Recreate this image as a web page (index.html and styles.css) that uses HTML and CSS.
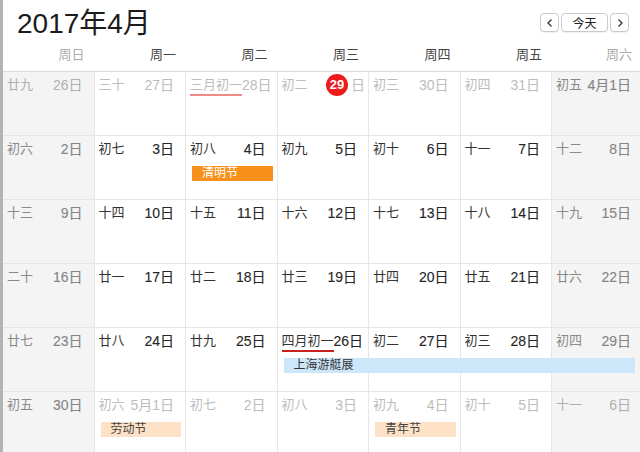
FILE: index.html
```html
<!DOCTYPE html>
<html lang="zh-CN">
<head>
<meta charset="utf-8">
<title>2017年4月</title>
<link rel="stylesheet" href="styles.css">
</head>
<body>
<div class="app">
  <header class="top">
    <h1 class="title">2017年4月</h1>
    <div class="nav">
      <button class="btn arrow" aria-label="上个月"><svg width="8" height="10" viewBox="0 0 8 10"><path d="M5.5 1.5 L2 5 L5.5 8.5" fill="none" stroke="#333" stroke-width="1.3"/></svg></button>
      <button class="btn today">今天</button>
      <button class="btn arrow" aria-label="下个月"><svg width="8" height="10" viewBox="0 0 8 10"><path d="M2.5 1.5 L6 5 L2.5 8.5" fill="none" stroke="#333" stroke-width="1.3"/></svg></button>
    </div>
  </header>
  <div class="weekdays">
    <div class="wd we">周日</div>
    <div class="wd">周一</div>
    <div class="wd">周二</div>
    <div class="wd">周三</div>
    <div class="wd">周四</div>
    <div class="wd">周五</div>
    <div class="wd we">周六</div>
  </div>
  <div class="month">
    <div class="week">
      <div class="cell wkend out"><span class="lunar">廿九</span><span class="num">26日</span></div>
      <div class="cell out"><span class="lunar">三十</span><span class="num">27日</span></div>
      <div class="cell out"><span class="lunar mark light">三月初一</span><span class="num">28日</span></div>
      <div class="cell out today"><span class="lunar">初二</span><span class="num"><span class="circle">29</span>日</span></div>
      <div class="cell out"><span class="lunar">初三</span><span class="num">30日</span></div>
      <div class="cell out"><span class="lunar">初四</span><span class="num">31日</span></div>
      <div class="cell wkend"><span class="lunar">初五</span><span class="num">4月1日</span></div>
    </div>
    <div class="week">
      <div class="cell wkend"><span class="lunar">初六</span><span class="num">2日</span></div>
      <div class="cell"><span class="lunar">初七</span><span class="num">3日</span></div>
      <div class="cell"><span class="lunar">初八</span><span class="num">4日</span></div>
      <div class="cell"><span class="lunar">初九</span><span class="num">5日</span></div>
      <div class="cell"><span class="lunar">初十</span><span class="num">6日</span></div>
      <div class="cell"><span class="lunar">十一</span><span class="num">7日</span></div>
      <div class="cell wkend"><span class="lunar">十二</span><span class="num">8日</span></div>
      <div class="ev orange col-tue">清明节</div>
    </div>
    <div class="week">
      <div class="cell wkend"><span class="lunar">十三</span><span class="num">9日</span></div>
      <div class="cell"><span class="lunar">十四</span><span class="num">10日</span></div>
      <div class="cell"><span class="lunar">十五</span><span class="num">11日</span></div>
      <div class="cell"><span class="lunar">十六</span><span class="num">12日</span></div>
      <div class="cell"><span class="lunar">十七</span><span class="num">13日</span></div>
      <div class="cell"><span class="lunar">十八</span><span class="num">14日</span></div>
      <div class="cell wkend"><span class="lunar">十九</span><span class="num">15日</span></div>
    </div>
    <div class="week">
      <div class="cell wkend"><span class="lunar">二十</span><span class="num">16日</span></div>
      <div class="cell"><span class="lunar">廿一</span><span class="num">17日</span></div>
      <div class="cell"><span class="lunar">廿二</span><span class="num">18日</span></div>
      <div class="cell"><span class="lunar">廿三</span><span class="num">19日</span></div>
      <div class="cell"><span class="lunar">廿四</span><span class="num">20日</span></div>
      <div class="cell"><span class="lunar">廿五</span><span class="num">21日</span></div>
      <div class="cell wkend"><span class="lunar">廿六</span><span class="num">22日</span></div>
    </div>
    <div class="week">
      <div class="cell wkend"><span class="lunar">廿七</span><span class="num">23日</span></div>
      <div class="cell"><span class="lunar">廿八</span><span class="num">24日</span></div>
      <div class="cell"><span class="lunar">廿九</span><span class="num">25日</span></div>
      <div class="cell"><span class="lunar mark">四月初一</span><span class="num">26日</span></div>
      <div class="cell"><span class="lunar">初二</span><span class="num">27日</span></div>
      <div class="cell"><span class="lunar">初三</span><span class="num">28日</span></div>
      <div class="cell wkend"><span class="lunar">初四</span><span class="num">29日</span></div>
      <div class="ev blue col-wed-sat">上海游艇展</div>
    </div>
    <div class="week">
      <div class="cell wkend"><span class="lunar">初五</span><span class="num">30日</span></div>
      <div class="cell out"><span class="lunar">初六</span><span class="num">5月1日</span></div>
      <div class="cell out"><span class="lunar">初七</span><span class="num">2日</span></div>
      <div class="cell out"><span class="lunar">初八</span><span class="num">3日</span></div>
      <div class="cell out"><span class="lunar">初九</span><span class="num">4日</span></div>
      <div class="cell out"><span class="lunar">初十</span><span class="num">5日</span></div>
      <div class="cell wkend out"><span class="lunar">十一</span><span class="num">6日</span></div>
      <div class="ev peach col-mon">劳动节</div>
      <div class="ev peach col-thu">青年节</div>
    </div>
  </div>
</div>
</body>
</html>
```

FILE: styles.css
```css
* { box-sizing: border-box; }

html, body {
  margin: 0;
  padding: 0;
  background: #fff;
  overflow: hidden;
}

body {
  font-family: "Liberation Sans", "Noto Sans CJK SC", sans-serif;
  color: #222;
}

.app {
  width: 640px;
  height: 452px;
  border-left: 3px solid #b3b3b3;
  overflow: hidden;
}

.top {
  display: flex;
  justify-content: space-between;
  align-items: flex-start;
  height: 42px;
}

.title {
  margin: 0;
  padding: 4px 0 0 14px;
  font-size: 28px;
  font-weight: normal;
  line-height: 40px;
  color: #1b1b1b;
  white-space: nowrap;
}

.nav {
  display: flex;
  gap: 2px;
  margin: 13px 11px 0 0;
}

.btn {
  height: 19px;
  border: 1px solid #cacaca;
  border-radius: 4px;
  background: #fff;
  padding: 0;
  display: flex;
  align-items: center;
  justify-content: center;
  font-family: "Liberation Sans", "Noto Sans CJK SC", sans-serif;
  font-size: 12px;
  color: #222;
  box-shadow: 0 1px 0 rgba(0,0,0,0.05);
}

.btn.arrow { width: 19px; }
.btn.today { width: 47px; }

.weekdays {
  display: grid;
  grid-template-columns: repeat(6, 91.5px) 88px;
  height: 30px;
  border-bottom: 1px solid #d9d9d9;
}

.wd {
  text-align: right;
  padding: 4px 10px 0 0;
  font-size: 13px;
  line-height: 18px;
  color: #444;
}

.wd.we { color: #ababab; }
.wd:last-child { padding-right: 8px; }

.week {
  display: grid;
  grid-template-columns: repeat(6, 91.5px) 88px;
  grid-template-rows: 30px 15px 1fr;
  height: 64px;
}

.cell {
  grid-row: 1 / 4;
  display: flex;
  justify-content: space-between;
  align-items: flex-start;
  padding: 4px 11px 0 4px;
  border-right: 1px solid #e6e6e6;
  border-bottom: 1px solid #e6e6e6;
  white-space: nowrap;
  min-width: 0;
}

.cell:nth-child(1) { grid-column: 1; }
.cell:nth-child(2) { grid-column: 2; }
.cell:nth-child(3) { grid-column: 3; }
.cell:nth-child(4) { grid-column: 4; }
.cell:nth-child(5) { grid-column: 5; }
.cell:nth-child(6) { grid-column: 6; }
.cell:nth-child(7) { grid-column: 7; border-right: 0; padding-right: 9px; }

.cell.wkend { background: #f4f4f4; }

.lunar {
  font-size: 13px;
  line-height: 18px;
  color: #333;
  flex: none;
}

.num {
  font-size: 14px;
  line-height: 18px;
  color: #262626;
  -webkit-text-stroke: 0.12px currentColor;
  flex: none;
  display: inline-flex;
  align-items: center;
}

.cell.wkend .lunar { color: #8a8a8a; }
.cell.wkend .num { color: #858585; }

.cell.out .lunar,
.cell.out .num { color: #bcbcbc; -webkit-text-stroke: 0; }

.cell.wkend.out .lunar,
.cell.wkend.out .num { color: #b0b0b0; }

.mark {
  border-bottom: 2px solid #c8201c;
  line-height: 17px;
  padding-bottom: 1px;
}

.mark.light { border-bottom-color: #f08a86; }

.cell.today { padding-right: 3px; }

.circle {
  display: inline-flex;
  align-items: center;
  justify-content: center;
  width: 22px;
  height: 22px;
  margin: -2px 3px -2px 0;
  border-radius: 50%;
  background: #ec1c1c;
  color: #fff;
  font-weight: bold;
  font-size: 13px;
  -webkit-text-stroke: 0;
}

.ev {
  grid-row: 2;
  margin: 0 5px 0 6px;
  padding-left: 10px;
  font-size: 12px;
  line-height: 15px;
  white-space: nowrap;
  overflow: hidden;
  z-index: 1;
}

.col-mon { grid-column: 2; }
.col-tue { grid-column: 3; }
.col-thu { grid-column: 5; }
.col-wed-sat { grid-column: 4 / 8; }

.ev.orange { background: #f7911c; color: #fff; }
.ev.blue { background: #cde7fa; color: #333; }
.ev.peach { background: #fde2c8; color: #444; }
```
